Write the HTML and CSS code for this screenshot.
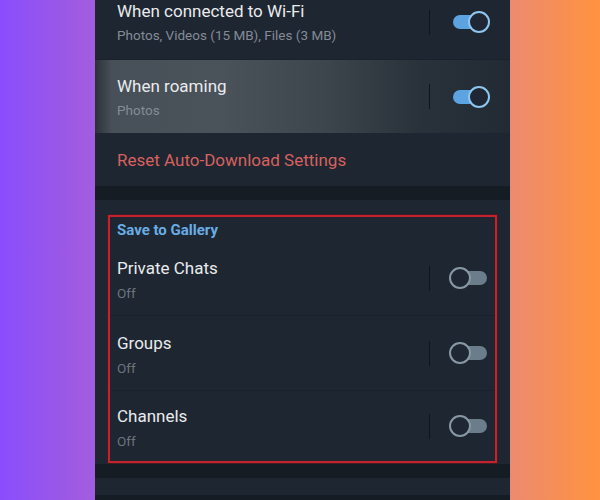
FILE: index.html
```html
<!DOCTYPE html>
<html>
<head>
    <meta charset="UTF-8">
    <title>Data and Storage - Save to Gallery</title>
    <link rel="stylesheet" href="styles.css">
</head>
<body>
    <div class="phone">
        <!-- auto-download block, scrolled up a little -->
        <div class="block top-block">
            <div class="row">
                <div class="row-text">
                    <div class="row-title">When connected to Wi-Fi</div>
                    <div class="row-sub">Photos, Videos (15 MB), Files (3 MB)</div>
                </div>
                <span class="vline"></span>
                <span class="toggle on"><span class="track"></span><span class="knob"></span></span>
            </div>
            <div class="row pressed">
                <div class="row-text">
                    <div class="row-title">When roaming</div>
                    <div class="row-sub">Photos</div>
                </div>
                <span class="vline"></span>
                <span class="toggle on"><span class="track"></span><span class="knob"></span></span>
            </div>
            <div class="reset">Reset Auto-Download Settings</div>
        </div>

        <div class="gap"></div>

        <!-- save to gallery block, highlighted -->
        <div class="block gallery-block">
            <div class="highlight">
                <div class="block-head">Save to Gallery</div>
                <div class="row">
                    <div class="row-text">
                        <div class="row-title">Private Chats</div>
                        <div class="row-off">Off</div>
                    </div>
                    <span class="vline"></span>
                    <span class="toggle"><span class="track"></span><span class="knob"></span></span>
                </div>
                <div class="row">
                    <div class="row-text">
                        <div class="row-title">Groups</div>
                        <div class="row-off">Off</div>
                    </div>
                    <span class="vline"></span>
                    <span class="toggle"><span class="track"></span><span class="knob"></span></span>
                </div>
                <div class="row last">
                    <div class="row-text">
                        <div class="row-title">Channels</div>
                        <div class="row-off">Off</div>
                    </div>
                    <span class="vline"></span>
                    <span class="toggle"><span class="track"></span><span class="knob"></span></span>
                </div>
            </div>
        </div>

        <div class="gap"></div>
        <div class="block next-block"></div>
    </div>
</body>
</html>
```

FILE: styles.css
```css
body {
    margin: 0;
    width: 600px;
    height: 500px;
    overflow: hidden;
    background: linear-gradient(90deg, #8a4dfd 0%, #a35edc 16%, #ec8a70 85%, #ff933f 100%);
    font-family: Roboto, "Noto Sans", sans-serif;
}
.phone {
    width: 415px;
    height: 500px;
    margin-left: 95px;
    background-color: #161c23;
    overflow: hidden;
}
.block {
    background-color: #1e2631;
}
.top-block {
    margin-top: -15px;
}
.gap {
    height: 14px;
}
.row {
    display: flex;
    align-items: center;
    height: 74px;
    padding: 0 22px;
    border-bottom: 1px solid #1a212a;
}
.row-text {
    flex: 1;
    padding-top: 1px;
}
.row-title {
    color: #e9ebed;
    font-size: 17px;
    line-height: 20px;
}
.row-sub {
    color: #838c96;
    font-size: 13.5px;
    line-height: 18px;
    margin-top: 5px;
}
.row-off {
    color: #6b747e;
    font-size: 13.5px;
    line-height: 18px;
    margin-top: 6px;
}
.pressed {
    height: 73px;
    border-bottom: none;
    background: linear-gradient(90deg, #2a3139 0%, #475058 4%, #4a525a 30%, #3d454d 55%, #29313a 78%, #222a33 100%);
}
.vline {
    width: 1px;
    height: 25px;
    background-color: #10151b;
    margin-right: 18px;
}
.toggle {
    position: relative;
    width: 40px;
    height: 22px;
}
.track {
    position: absolute;
    top: 4px;
    left: 12px;
    width: 27px;
    height: 14px;
    border-radius: 7px;
    background-color: #6b7d8a;
}
.knob {
    position: absolute;
    top: 0;
    left: 1px;
    width: 18px;
    height: 18px;
    border: 2px solid #8898a4;
    border-radius: 50%;
    background-color: #1e2733;
}
.toggle.on .track {
    left: 5px;
    width: 35px;
    background-color: #5ca4e1;
}
.toggle.on .knob {
    left: 20px;
    border-color: #8fc5ef;
}
.reset {
    height: 53px;
    line-height: 54px;
    padding-left: 22px;
    color: #d7615f;
    font-size: 17px;
}
.gallery-block {
    padding: 15px 13px 1px 13px;
}
.highlight {
    border: 2px solid #c4222d;
    box-shadow: 0 0 0 1px rgba(90, 20, 30, 0.6);
}
.highlight .row {
    padding: 0 7px;
}
.highlight .row-text {
    padding-top: 4px;
}
.highlight .row.last {
    height: 70px;
    border-bottom: none;
}
.block-head {
    color: #6aade5;
    font-size: 15px;
    font-weight: bold;
    line-height: 20px;
    padding: 3px 7px 1px 7px;
}
.next-block {
    height: 17px;
}
```
